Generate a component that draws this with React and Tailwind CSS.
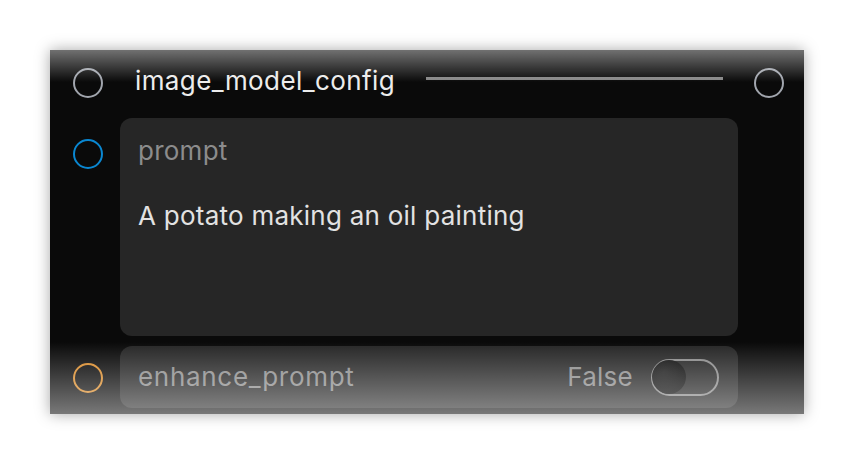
import React, { useState } from 'react';

const Port = ({ color }) => (
  <div className={`w-[30px] h-[30px] rounded-full border-[2.5px] ${color}`} />
);

const Toggle = ({ on, onChange }) => (
  <button
    onClick={() => onChange(!on)}
    className="relative w-[68px] h-[37px] rounded-full border-[2.5px] border-[#8a8a8a] bg-transparent p-0"
  >
    <span
      className={`absolute top-[-1px] w-[34px] h-[34px] rounded-full bg-[radial-gradient(circle_at_35%_35%,#1a1a1a,#050505)] ${
        on ? 'right-[-1px]' : 'left-[-1px]'
      }`}
    />
  </button>
);

const App = () => {
  const [enhance, setEnhance] = useState(false);

  return (
    <div
      className="w-[854px] h-[464px] bg-white pt-[50px] pl-[50px]"
      style={{ fontFamily: 'Inter, "Noto Sans", sans-serif' }}
    >
      <div className="relative w-[754px] h-[364px] overflow-hidden bg-[#0a0a0a] shadow-[0_0_14px_rgba(0,0,0,0.35)]">
        {/* node header */}
        <div className="flex items-center h-[66px] pl-[23px] pr-[20px]">
          <Port color="border-[#a1a5ad]" />
          <span className="ml-[32px] text-[26px] leading-[30px] tracking-[0.4px] text-[#ececec] -mt-[4px]">
            image_model_config
          </span>
          <div className="flex-1 mx-[31px] h-[3px] bg-[#858585] -mt-[10px]" />
          <Port color="border-[#a1a5ad]" />
        </div>

        {/* inputs */}
        <div className="flex flex-col gap-[10px] mt-[2px]">
          <div className="flex">
            <div className="w-[70px] pl-[23px] pt-[21px]">
              <Port color="border-[#0a87d1]" />
            </div>
            <div className="w-[618px] h-[218px] rounded-[12px] bg-[#262626] px-[18px] pt-[18px] tracking-[0.25px]">
              <div className="text-[26px] leading-[30px] text-[#8c8c8c]">prompt</div>
              <div className="mt-[35px] text-[26px] leading-[30px] text-[#e2e2e2]">
                A potato making an oil painting
              </div>
            </div>
          </div>

          <div className="flex">
            <div className="w-[70px] pl-[23px] pt-[17px]">
              <Port color="border-[#d98b2b]" />
            </div>
            <div className="w-[618px] h-[62px] rounded-[12px] bg-[#262626] pl-[18px] pr-[19px] flex items-center">
              <span className="text-[26px] leading-[30px] tracking-[0.7px] text-[#8c8c8c]">enhance_prompt</span>
              <span className="ml-auto mr-[18px] text-[26px] leading-[30px] tracking-[0.25px] text-[#8c8c8c]">
                {enhance ? 'True' : 'False'}
              </span>
              <Toggle on={enhance} onChange={setEnhance} />
            </div>
          </div>
        </div>

        {/* edge fades */}
        <div className="pointer-events-none absolute inset-x-0 top-0 h-[32px] bg-gradient-to-b from-[rgba(255,255,255,0.42)] to-transparent" />
        <div className="pointer-events-none absolute inset-x-0 bottom-0 h-[72px] bg-gradient-to-t from-[rgba(255,255,255,0.45)] to-transparent" />
      </div>
    </div>
  );
};

export default App;
